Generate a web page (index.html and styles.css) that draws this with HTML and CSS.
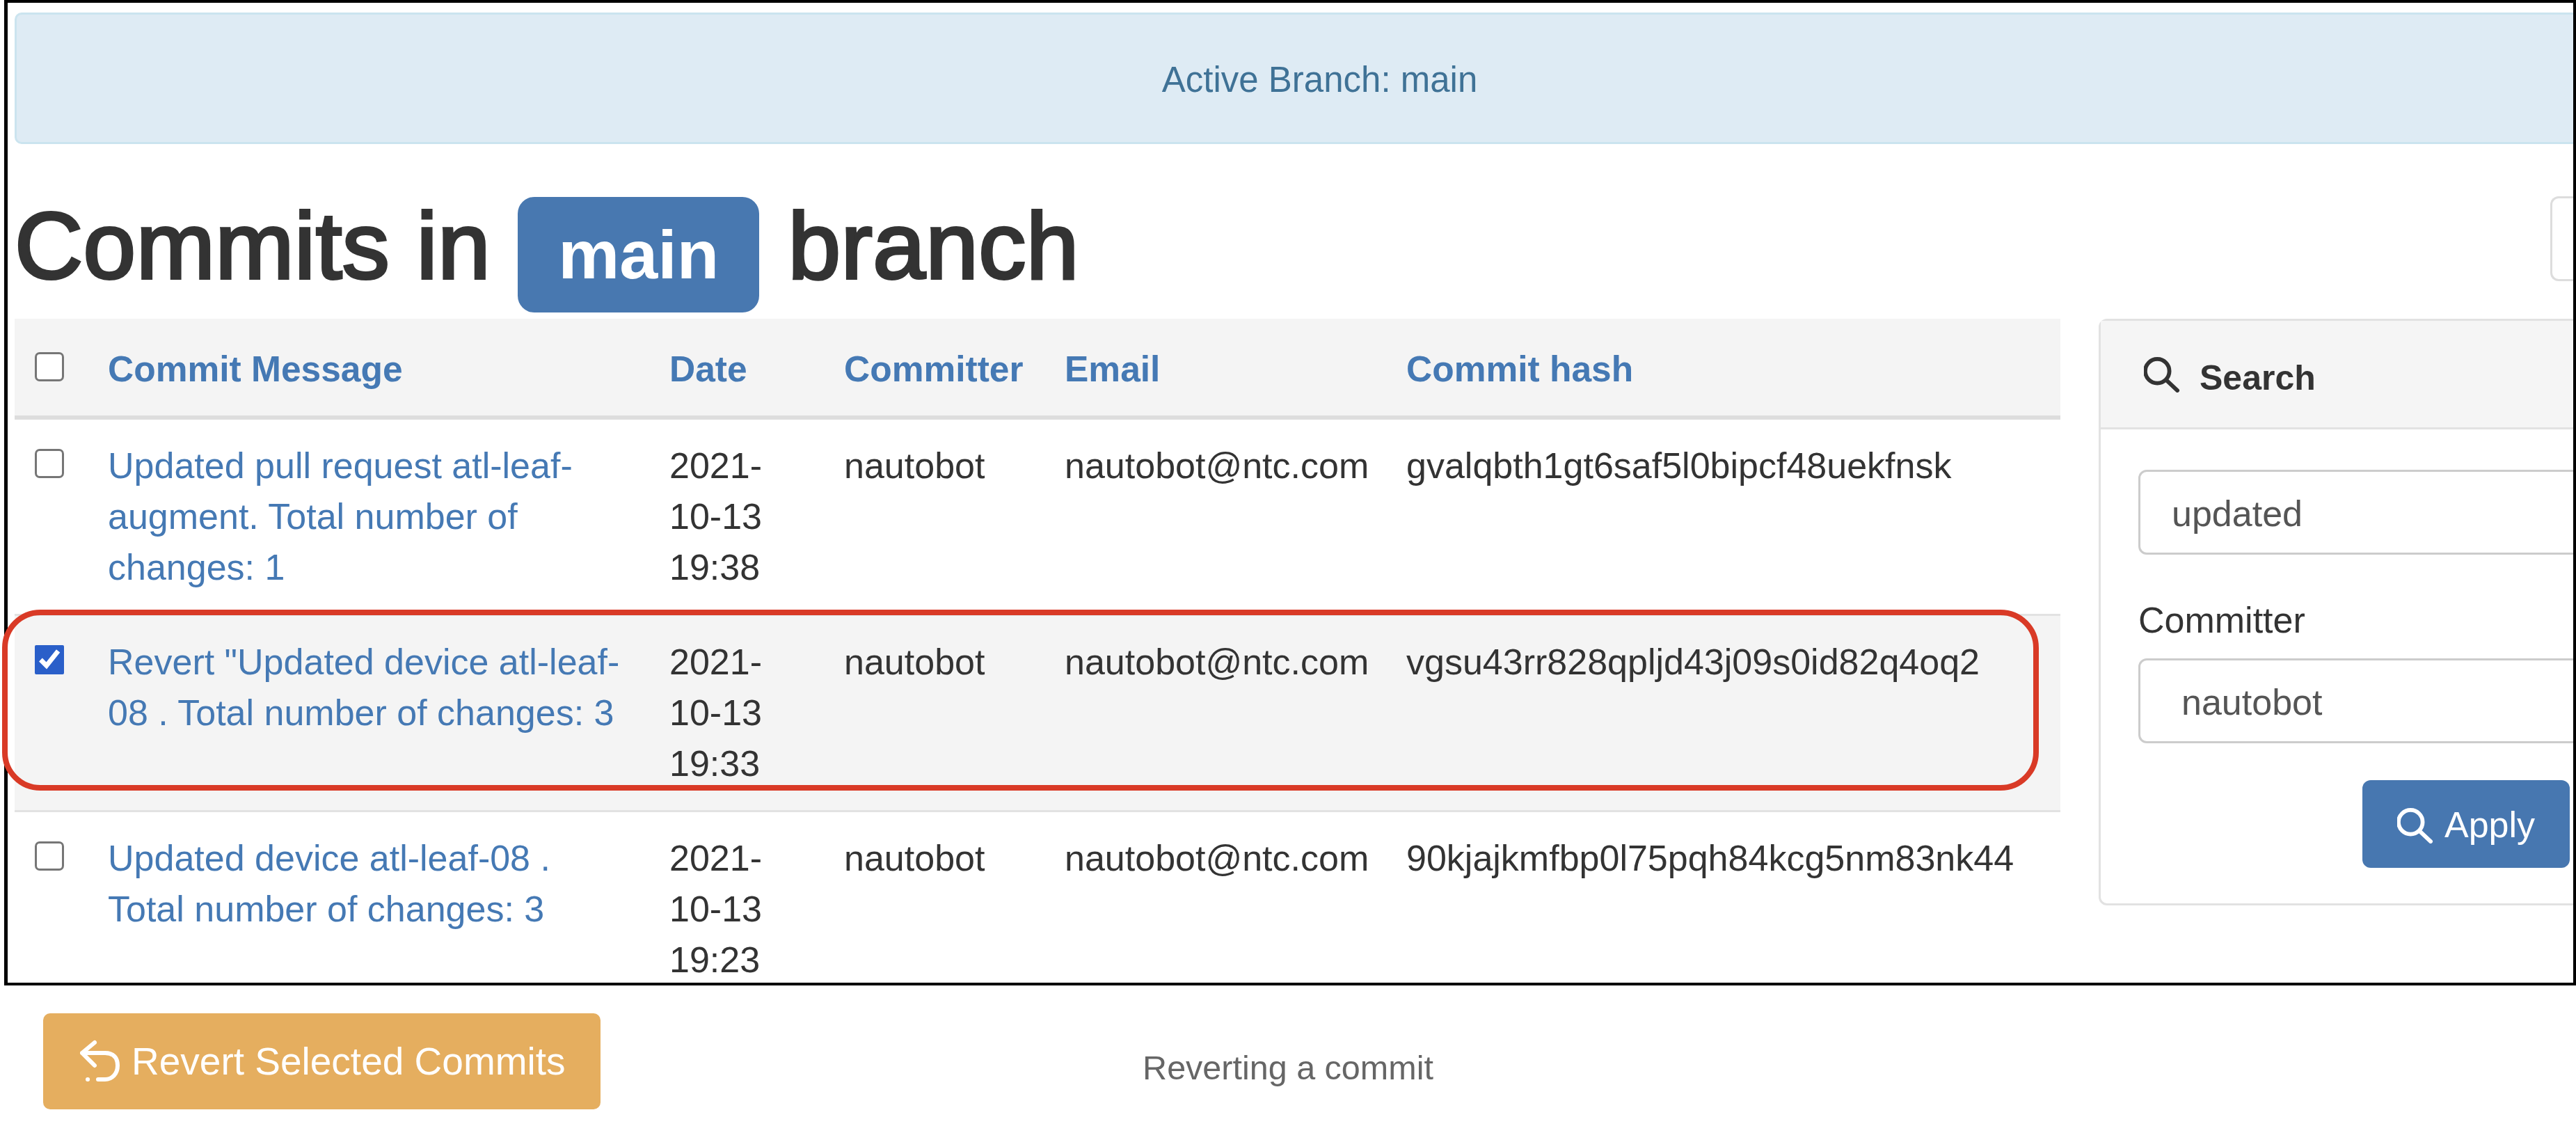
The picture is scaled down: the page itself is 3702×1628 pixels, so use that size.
FILE: index.html
```html
<!DOCTYPE html>
<html lang="en">
<head>
  <meta charset="UTF-8" />
  <title>Reverting a commit</title>
  <link rel="stylesheet" href="styles.css">
</head>
<body>
  <div class="frame">
    <div class="alert">Active Branch: main</div>

    <div class="title-row">
      <h1 class="title">Commits in <span class="badge">main</span> branch</h1>
      <div class="corner-btn"></div>
    </div>

    <div class="content">
      <table class="commits">
        <colgroup>
          <col class="col-check">
          <col class="col-message">
          <col class="col-date">
          <col class="col-committer">
          <col class="col-email">
          <col class="col-hash">
        </colgroup>
        <thead>
          <tr>
            <th><input type="checkbox" class="check"></th>
            <th><a href="#">Commit Message</a></th>
            <th><a href="#">Date</a></th>
            <th><a href="#">Committer</a></th>
            <th><a href="#">Email</a></th>
            <th><a href="#">Commit hash</a></th>
          </tr>
        </thead>
        <tbody>
          <tr>
            <td><input type="checkbox" class="check"></td>
            <td><a href="#">Updated pull request atl-leaf-augment. Total number of changes: 1</a></td>
            <td>2021-10-13 19:38</td>
            <td>nautobot</td>
            <td>nautobot@ntc.com</td>
            <td>gvalqbth1gt6saf5l0bipcf48uekfnsk</td>
          </tr>
          <tr class="selected">
            <td><input type="checkbox" class="check" checked></td>
            <td><a href="#">Revert "Updated device atl-leaf-08 . Total number of changes: 3</a></td>
            <td>2021-10-13 19:33</td>
            <td>nautobot</td>
            <td>nautobot@ntc.com</td>
            <td>vgsu43rr828qpljd43j09s0id82q4oq2</td>
          </tr>
          <tr>
            <td><input type="checkbox" class="check"></td>
            <td><a href="#">Updated device atl-leaf-08 . Total number of changes: 3</a></td>
            <td>2021-10-13 19:23</td>
            <td>nautobot</td>
            <td>nautobot@ntc.com</td>
            <td>90kjajkmfbp0l75pqh84kcg5nm83nk44</td>
          </tr>
        </tbody>
      </table>

      <div class="panel">
        <div class="panel-head">
          <svg class="icon-search" viewBox="10 7 54 54" fill="none" stroke="#333" stroke-width="6" stroke-linecap="round">
            <circle cx="30" cy="29" r="18"/>
            <path d="M44 43 L60 58"/>
          </svg>
          <span class="panel-title">Search</span>
        </div>
        <div class="panel-body">
          <input type="text" class="field field-first" value="updated">
          <label class="field-label">Committer</label>
          <input type="text" class="field field-select" value="nautobot">
          <div class="actions">
            <button class="btn btn-apply">
              <svg class="icon-search" viewBox="10 7 54 54" fill="none" stroke="#fff" stroke-width="6" stroke-linecap="round">
                <circle cx="30" cy="29" r="18"/>
                <path d="M44 43 L60 58"/>
              </svg>
              Apply
            </button>
          </div>
        </div>
      </div>
    </div>
  </div>

  <div class="footer">
    <button class="btn btn-revert">
      <svg class="icon-undo" viewBox="12 6 60 62" fill="none" stroke="#fff" stroke-width="6" stroke-linecap="round" stroke-linejoin="round">
        <path d="M33 10 L15 25 L33 43 M15 25 H48 C60 25 66 32 66 43 C66 55 58 63 48 63 H38"/>
        <path d="M23 63 h0.1"/>
      </svg>
      Revert Selected Commits
    </button>
    <div class="caption">Reverting a commit</div>
  </div>

  <!-- red annotation drawn over the screenshot -->
  <div class="highlight"></div>
</body>
</html>
```

FILE: styles.css
```css
* {
  box-sizing: border-box;
}

body {
  position: relative;
  margin: 0;
  height: 1628px;
  overflow: hidden;
  background: #fff;
  color: #333;
  font-family: "Liberation Sans", Arial, sans-serif;
  font-size: 52px;
  line-height: 73px;
}

a {
  color: #4579b4;
  text-decoration: none;
}

.frame {
  width: 3696px;
  height: 1416px;
  margin-left: 6px;
  padding: 14px 0 0 10px;
  border: solid #000;
  border-width: 4px 4px 4px 5px;
  overflow: hidden;
}

/* wider than the frame, the right end is cut off */
.alert {
  display: flex;
  justify-content: center;
  align-items: center;
  width: 3751px;
  height: 189px;
  padding-top: 4px;
  background: #deebf4;
  border: 3px solid #cbe4ef;
  border-radius: 10px;
  color: #3f7296;
  font-size: 51px;
}

.title-row {
  display: flex;
  align-items: flex-start;
  height: 188px;
  margin-top: 63px;
}

.title {
  margin: 0;
  font-size: 136px;
  font-weight: 400;
  line-height: 166px;
  letter-spacing: 0.4px;
  -webkit-text-stroke: 4px #333;
  white-space: nowrap;
}

.badge {
  display: inline-block;
  height: 166px;
  margin: 0 3px 0 1px;
  padding: 0 58px;
  background: #4878b0;
  border-radius: 24px;
  color: #fff;
  font-size: 99px;
  font-weight: 700;
  letter-spacing: 0;
  -webkit-text-stroke: 0;
}

.corner-btn {
  width: 33px;
  height: 122px;
  margin-top: 12px;
  margin-left: auto;
  border: 3px solid #ddd;
  border-right: none;
  border-radius: 12px 0 0 12px;
}

.content {
  display: flex;
  align-items: flex-start;
  gap: 55px;
}

.commits {
  flex: none;
  width: 2940px;
  table-layout: fixed;
  border-collapse: collapse;
}

.col-check { width: 105px; }
.col-message { width: 807px; }
.col-date { width: 251px; }
.col-committer { width: 317px; }
.col-email { width: 491px; }
.col-hash { width: 969px; }

.commits th,
.commits td {
  padding: 30px 29px;
  text-align: left;
  vertical-align: top;
}

.commits th {
  height: 142px;
  padding-top: 36px;
  background: #f4f4f4;
  border-bottom: 6px solid #ddd;
  font-size: 51.5px;
  font-weight: 700;
}

.commits td {
  border-bottom: 3px solid #e2e2e2;
}

.commits .selected td {
  background: #f4f4f4;
}

.check {
  width: 42px;
  height: 42px;
  margin: 8px 0 0;
  accent-color: #2a5fc9;
}

.check:not(:checked) {
  appearance: none;
  background: #fff;
  border: 3px solid #767676;
  border-radius: 7px;
}

.panel {
  flex: none;
  width: 800px;
  height: 843px;
  background: #fff;
  border: 3px solid #e2e2e2;
  border-radius: 12px;
}

.panel-head {
  display: flex;
  align-items: center;
  gap: 28px;
  height: 156px;
  padding-left: 62px;
  background: #f5f5f5;
  border-bottom: 3px solid #e2e2e2;
  font-size: 50px;
  font-weight: 700;
}

.panel-title {
  margin-top: 12px;
}

.icon-search {
  flex: none;
  width: 52px;
  height: 52px;
}

.panel-body {
  padding: 58px 0 0 54px;
}

.field {
  display: block;
  width: 720px;
  height: 122px;
  background: #fff;
  border: 3px solid #ccc;
  border-radius: 12px;
  color: #555;
  font: inherit;
}

.field-first {
  margin-bottom: 58px;
  padding: 3px 0 0 45px;
}

.field-select {
  padding: 3px 0 0 59px;
}

.field-label {
  display: block;
  margin-bottom: 18px;
}

.actions {
  display: flex;
  justify-content: flex-end;
  width: 620px;
  margin-top: 53px;
}

.btn {
  display: flex;
  align-items: center;
  border: none;
  color: #fff;
  font: inherit;
}

.btn-apply {
  gap: 16px;
  width: 298px;
  height: 126px;
  padding: 3px 0 0 50px;
  background: #4777b0;
  border-radius: 12px;
}

.footer {
  display: grid;
  grid-template-columns: 1fr auto 1fr;
  margin-top: 40px;
}

.btn-revert {
  justify-self: start;
  gap: 14px;
  width: 801px;
  height: 138px;
  margin-left: 62px;
  padding: 0 0 0 53px;
  background: #e5ae5f;
  border-radius: 10px;
  font-size: 55px;
}

.icon-undo {
  flex: none;
  width: 60px;
  height: 62px;
}

.caption {
  padding-top: 42px;
  color: #666;
  font-size: 48.5px;
}

.highlight {
  position: absolute;
  top: 876px;
  left: 3px;
  width: 2927px;
  height: 260px;
  border: 8px solid #d93a26;
  border-radius: 55px;
}
```
